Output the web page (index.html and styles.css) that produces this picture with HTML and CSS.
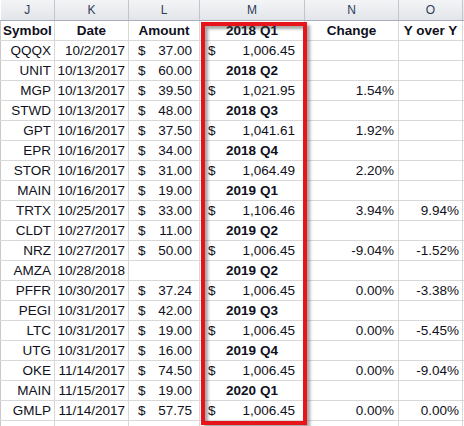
FILE: index.html
```html
<!DOCTYPE html>
<html>
<head>
<meta charset="utf-8">
<title>Quarterly totals</title>
<link rel="stylesheet" href="styles.css">
</head>
<body>
<div class="sheet">
  <table class="grid">
    <colgroup>
      <col class="c-j"><col class="c-k"><col class="c-l"><col class="c-m"><col class="c-n"><col class="c-o"><col class="c-p">
    </colgroup>
    <thead>
      <tr class="letters">
        <th>J</th><th>K</th><th>L</th><th>M</th><th>N</th><th>O</th><th></th>
      </tr>
    </thead>
    <tbody>
      <tr class="titles">
        <td>Symbol</td><td>Date</td><td>Amount</td><td>2018 Q1</td><td>Change</td><td>Y over Y</td><td></td>
      </tr>
      <tr><td class="r">QQQX</td><td class="r">10/2/2017</td><td class="amt"><span>$</span><span>37.00</span></td><td class="tot"><span>$</span><span>1,006.45</span></td><td></td><td></td><td></td></tr>
      <tr><td class="r">UNIT</td><td class="r">10/13/2017</td><td class="amt"><span>$</span><span>60.00</span></td><td class="q">2018 Q2</td><td></td><td></td><td></td></tr>
      <tr><td class="r">MGP</td><td class="r">10/13/2017</td><td class="amt"><span>$</span><span>39.50</span></td><td class="tot"><span>$</span><span>1,021.95</span></td><td class="pct">1.54%</td><td></td><td></td></tr>
      <tr><td class="r">STWD</td><td class="r">10/13/2017</td><td class="amt"><span>$</span><span>48.00</span></td><td class="q">2018 Q3</td><td></td><td></td><td></td></tr>
      <tr><td class="r">GPT</td><td class="r">10/16/2017</td><td class="amt"><span>$</span><span>37.50</span></td><td class="tot"><span>$</span><span>1,041.61</span></td><td class="pct">1.92%</td><td></td><td></td></tr>
      <tr><td class="r">EPR</td><td class="r">10/16/2017</td><td class="amt"><span>$</span><span>34.00</span></td><td class="q">2018 Q4</td><td></td><td></td><td></td></tr>
      <tr><td class="r">STOR</td><td class="r">10/16/2017</td><td class="amt"><span>$</span><span>31.00</span></td><td class="tot"><span>$</span><span>1,064.49</span></td><td class="pct">2.20%</td><td></td><td></td></tr>
      <tr><td class="r">MAIN</td><td class="r">10/16/2017</td><td class="amt"><span>$</span><span>19.00</span></td><td class="q">2019 Q1</td><td></td><td></td><td></td></tr>
      <tr><td class="r">TRTX</td><td class="r">10/25/2017</td><td class="amt"><span>$</span><span>33.00</span></td><td class="tot"><span>$</span><span>1,106.46</span></td><td class="pct">3.94%</td><td class="yoy">9.94%</td><td></td></tr>
      <tr><td class="r">CLDT</td><td class="r">10/27/2017</td><td class="amt"><span>$</span><span>11.00</span></td><td class="q">2019 Q2</td><td></td><td></td><td></td></tr>
      <tr><td class="r">NRZ</td><td class="r">10/27/2017</td><td class="amt"><span>$</span><span>50.00</span></td><td class="tot"><span>$</span><span>1,006.45</span></td><td class="pct">-9.04%</td><td class="yoy">-1.52%</td><td></td></tr>
      <tr><td class="r">AMZA</td><td class="r">10/28/2018</td><td></td><td class="q">2019 Q2</td><td></td><td></td><td></td></tr>
      <tr><td class="r">PFFR</td><td class="r">10/30/2017</td><td class="amt"><span>$</span><span>37.24</span></td><td class="tot"><span>$</span><span>1,006.45</span></td><td class="pct">0.00%</td><td class="yoy">-3.38%</td><td></td></tr>
      <tr><td class="r">PEGI</td><td class="r">10/31/2017</td><td class="amt"><span>$</span><span>42.00</span></td><td class="q">2019 Q3</td><td></td><td></td><td></td></tr>
      <tr><td class="r">LTC</td><td class="r">10/31/2017</td><td class="amt"><span>$</span><span>19.00</span></td><td class="tot"><span>$</span><span>1,006.45</span></td><td class="pct">0.00%</td><td class="yoy">-5.45%</td><td></td></tr>
      <tr><td class="r">UTG</td><td class="r">10/31/2017</td><td class="amt"><span>$</span><span>16.00</span></td><td class="q">2019 Q4</td><td></td><td></td><td></td></tr>
      <tr><td class="r">OKE</td><td class="r">11/14/2017</td><td class="amt"><span>$</span><span>74.50</span></td><td class="tot"><span>$</span><span>1,006.45</span></td><td class="pct">0.00%</td><td class="yoy">-9.04%</td><td></td></tr>
      <tr><td class="r">MAIN</td><td class="r">11/15/2017</td><td class="amt"><span>$</span><span>19.00</span></td><td class="q">2020 Q1</td><td></td><td></td><td></td></tr>
      <tr><td class="r">GMLP</td><td class="r">11/14/2017</td><td class="amt"><span>$</span><span>57.75</span></td><td class="tot"><span>$</span><span>1,006.45</span></td><td class="pct">0.00%</td><td class="yoy">0.00%</td><td></td></tr>
      <tr><td></td><td></td><td></td><td></td><td></td><td></td><td></td></tr>
    </tbody>
  </table>
  <div class="mark"></div>
</div>
</body>
</html>
```

FILE: styles.css
```css
html, body {margin: 0; padding: 0; background: #fff; overflow: hidden;}
body {font-family: "Liberation Sans", Arial, sans-serif; font-size: 13.5px; color: #101020;}

.sheet {position: relative; width: 464px; height: 426px; overflow: hidden;}

.grid {border-collapse: collapse; table-layout: fixed; width: 470px;}
.c-j {width: 54px;}
.c-k {width: 74px;}
.c-l {width: 71px;}
.c-m {width: 105px;}
.c-n {width: 94px;}
.c-o {width: 64px;}
.c-p {width: 8px;}

.grid td {height: 19px; padding: 0 3px 0 2px; border: 1px solid #d8d8d8; white-space: nowrap; line-height: 19px; vertical-align: bottom; overflow: hidden;}
.grid td:first-child {border-left: 1px solid #c8c8c8;}

.letters th {height: 20px; padding: 0; font-size: 12px; font-weight: normal; color: #2c3d5a; background: linear-gradient(#f3f4f6, #e2e5e9); border-right: 1px solid #c2c6cc; border-bottom: 1px solid #a9afb8; line-height: 20px;}

.titles td {font-weight: bold; text-align: center; padding: 0;}

.r {text-align: right;}
.pct {text-align: right; padding-right: 4px !important;}
.yoy {text-align: right; padding-right: 3px !important;}

.amt span:first-child {float: left; padding-left: 7px;}
.amt span:last-child {float: right; padding-right: 4px;}
.tot span:first-child {float: left; padding-left: 6px;}
.tot span:last-child {float: right; padding-right: 6px;}

.q {font-weight: bold; text-align: center; padding: 0 !important;}

.mark {position: absolute; left: 201px; top: 22px; width: 98px; height: 395px; border: 4px solid #e8141b; box-shadow: 3px 3px 3px rgba(60, 60, 60, 0.45), inset 3px 3px 3px rgba(60, 60, 60, 0.45);}
```
